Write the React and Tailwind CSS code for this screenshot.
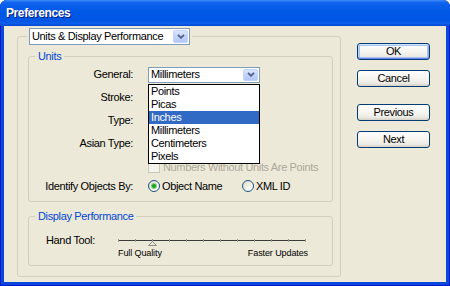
import React from "react";

function Chevron() {
  return (
    <svg width="8" height="5" viewBox="0 0 8 5" className="block">
      <polyline points="1,0.8 4,3.8 7,0.8" fill="none" stroke="#4D6185" strokeWidth="1.8" />
    </svg>
  );
}

function ArrowBtn() {
  return (
    <div className="w-[15px] h-full rounded-[2px] border border-[#C3D3FD] bg-[linear-gradient(180deg,#DCE6FD_0%,#C1D3FB_50%,#B4C8F6_100%)] flex items-center justify-center">
      <Chevron />
    </div>
  );
}

function Select({ value, className }) {
  return (
    <div className={"flex items-stretch bg-white border border-[#7F9DB9] p-[1px] " + className}>
      <div className="flex-1 pl-[1px] flex items-center whitespace-nowrap overflow-hidden">{value}</div>
      <ArrowBtn />
    </div>
  );
}

function Button({ children, isDefault }) {
  return (
    <div
      className={
        "w-[73px] h-[17px] rounded-[3px] border border-[#003C74] bg-[linear-gradient(180deg,#FFFFFF_0%,#F7F6F1_45%,#ECEBE6_80%,#D6D0C5_100%)] flex items-center justify-center " +
        (isDefault
          ? "shadow-[inset_0_1px_0_#CEE7FF,inset_0_-1px_0_#6982EE,inset_1px_0_0_#B9D1F6,inset_-1px_0_0_#8FAEEA,inset_0_0_0_2px_#A9C4F3]"
          : "")
      }
    >
      {children}
    </div>
  );
}

function Radio({ checked }) {
  return (
    <div className="w-[12px] h-[12px] shrink-0 rounded-full border border-[#1C5180] bg-[linear-gradient(135deg,#DCD9C5_0%,#F5F4EE_60%,#FFFFFF_100%)] flex items-center justify-center">
      {checked && <div className="w-[4px] h-[4px] rounded-full bg-[#21A121] shadow-[0_0_0_1px_#7ED07E]" />}
    </div>
  );
}

function Slider() {
  const ticks = [0, 17, 34, 51, 68, 85, 102, 119, 136, 153, 170, 187];
  return (
    <svg width="190" height="13" viewBox="0 0 190 13" className="block">
      <line x1="0" y1="6.5" x2="188" y2="6.5" stroke="#3A3A3A" strokeWidth="1" />
      {ticks.map((t) => (
        <rect key={t} x={t} y="5" width="1" height="3" fill="#9A9A9A" />
      ))}
      <polygon points="34.5,7.5 30.5,11.5 38.5,11.5" fill="#ECE9D8" stroke="#8A8A8A" strokeWidth="1" />
    </svg>
  );
}

const items = ["Points", "Picas", "Inches", "Millimeters", "Centimeters", "Pixels"];

export default function App() {
  return (
    <div className="w-[450px] h-[286px] bg-white font-['Liberation_Sans',Arial,sans-serif] text-[11px] leading-[13px] tracking-[-0.35px] text-black select-none">
      <div className="flex h-full flex-col rounded-t-[7px] overflow-hidden bg-[#0A47DC] shadow-[inset_0_0_0_1px_#0019CF]">
        <div className="h-[26px] shrink-0 flex items-center pl-[6px] bg-[linear-gradient(180deg,#3D8EF6_0%,#0F62EC_10%,#0058E6_45%,#0056E4_80%,#0A5EEA_90%,#0046D0_100%)]">
          <span className="text-white font-bold text-[12px] tracking-[-0.4px] [text-shadow:1px_1px_0_#0A1883]">Preferences</span>
        </div>
        <div className="flex-1 mx-[4px] mb-[4px] bg-[#ECE9D8] flex items-start">
          {/* Left group */}
          <fieldset className="ml-[13px] mt-[2px] w-[324px] border border-[#D0D0BF] rounded-[3px] p-0">
            <legend className="ml-[9px] px-[2px]">
              <Select value="Units & Display Performance" className="w-[161px] h-[17px]" />
            </legend>
            <div className="pl-[10px] pr-[7px] pt-[5px] pb-[10px]">
              {/* Units */}
              <fieldset className="border border-[#D0D0BF] rounded-[3px] p-0">
                <legend className="ml-[6px] px-[3px] text-[#0046D5]">Units</legend>
                <div className="pb-[8px]">
                  <div className="flex h-[23px] items-center">
                    <div className="w-[104px] text-right">General:</div>
                    <div className="ml-[15px] relative">
                      <Select value="Millimeters" className="w-[112px] h-[16px]" />
                      <div className="absolute left-0 top-[calc(100%+1px)] z-10 w-[112px] bg-white border border-black">
                        {items.map((it) => (
                          <div
                            key={it}
                            className={
                              "h-[13px] pl-[2px] flex items-center " +
                              (it === "Inches" ? "bg-[#316AC5] text-white" : "")
                            }
                          >
                            {it}
                          </div>
                        ))}
                      </div>
                    </div>
                  </div>
                  {["Stroke:", "Type:", "Asian Type:"].map((l) => (
                    <div key={l} className="flex h-[23px] items-center">
                      <div className="w-[104px] text-right">{l}</div>
                    </div>
                  ))}
                  <div className="flex h-[24px] items-center">
                    <div className="w-[119px]" />
                    <div className="w-[12px] h-[12px] border border-[#CAC8BB] bg-[#F4F3EE]" />
                    <div className="ml-[3px] text-[#ACA899]">Numbers Without Units Are Points</div>
                  </div>
                  <div className="flex h-[14px] items-center">
                    <div className="w-[104px] text-right">Identify Objects By:</div>
                    <div className="ml-[15px] w-[94px] flex items-center">
                      <Radio checked />
                      <span className="ml-[2px]">Object Name</span>
                    </div>
                    <div className="flex items-center">
                      <Radio />
                      <span className="ml-[2px]">XML ID</span>
                    </div>
                  </div>
                </div>
              </fieldset>
              {/* Display Performance */}
              <fieldset className="mt-[8px] border border-[#D0D0BF] rounded-[3px] p-0">
                <legend className="ml-[6px] px-[3px] text-[#0046D5]">Display Performance</legend>
                <div className="pt-[11px] pb-[5px]">
                  <div className="flex h-[13px] items-center pl-[17px]">
                    <div className="w-[72px]">Hand Tool:</div>
                    <Slider />
                  </div>
                  <div className="flex h-[13px] items-center pl-[89px]">
                    <div className="w-[190px] flex justify-between text-[9px] tracking-[-0.1px]">
                      <span>Full Quality</span>
                      <span>Faster Updates</span>
                    </div>
                  </div>
                </div>
              </fieldset>
            </div>
          </fieldset>
          {/* Buttons */}
          <div className="ml-[16px] mt-[17px] flex flex-col">
            <Button isDefault>OK</Button>
            <div className="mt-[10px]"><Button>Cancel</Button></div>
            <div className="mt-[17px]"><Button>Previous</Button></div>
            <div className="mt-[10px]"><Button>Next</Button></div>
          </div>
        </div>
      </div>
    </div>
  );
}
